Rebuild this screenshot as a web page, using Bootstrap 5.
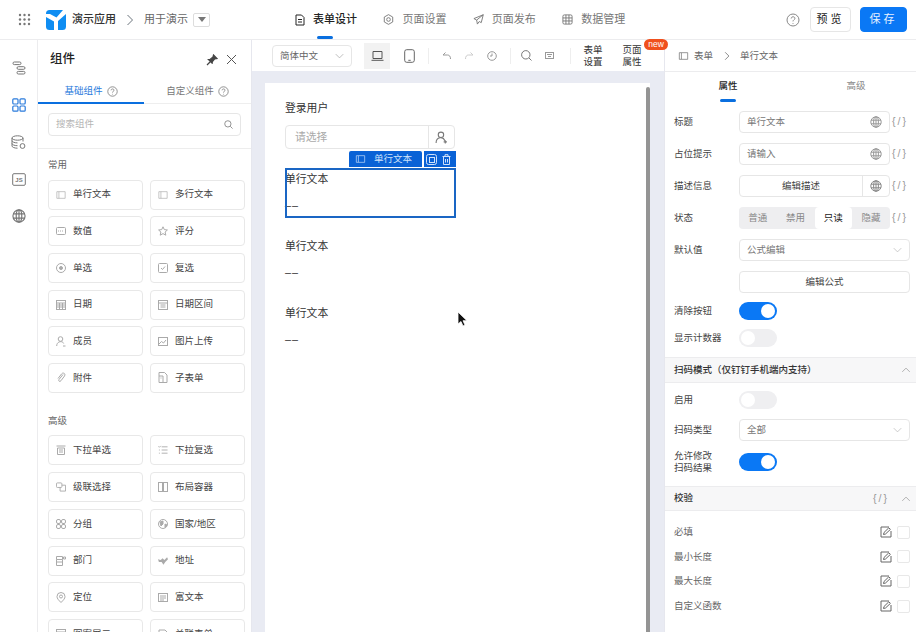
<!DOCTYPE html>
<html lang="zh"><head><meta charset="utf-8"><title>表单设计</title>
<link href="https://cdn.jsdelivr.net/npm/bootstrap@5.3.0/dist/css/bootstrap.min.css" rel="stylesheet">
<style>
html,body{height:632px;overflow:hidden}
body{font-family:"Liberation Sans","Noto Sans CJK SC",sans-serif;font-size:9.5px;color:#333;background:#fff;position:relative;line-height:1.3}
svg{display:block;flex:none;fill:none;stroke:currentColor;stroke-width:1}
.topbar{height:40px;border-bottom:1px solid #ececee;padding-left:18px}
.brandtxt{font-size:11px;color:#333;font-weight:500}
.subtxt{font-size:11px;color:#666}
.ver{width:17px;height:14px;border:1px solid #ddd;border-radius:2px;margin-left:5px}
.navi{font-size:11px;color:#777;position:relative;height:39px;gap:8px}
.navi.on{color:#222;font-weight:500}
.navi.on::after{content:"";position:absolute;left:22px;bottom:0;width:16px;height:3px;border-radius:2px;background:#0a6fdf}
.bt{height:25px;border-radius:4px;font-size:11px;letter-spacing:3px;border:1px solid #e6e6e6;background:#fff;color:#222;padding:0;white-space:nowrap}
.bt.pri{background:#0a78f5;border-color:#0a78f5;color:#e8f2ff}
.rail{width:38px;gap:23px;padding-top:21px;color:#777;border-right:1px solid #ececee;flex:none}
.leftp{width:214px;flex:none;border-right:1px solid #e6e7ee;overflow:hidden}
.ptitle{font-size:12.5px;font-weight:500;color:#222;height:39px;padding:0 14px 0 12px}
.tabx{height:25px;font-size:9.5px;color:#777;gap:4px;border-bottom:1px solid #eee}
.tabx.on{color:#2a7bdc;border-bottom:1px solid #0a6fdf;box-shadow:inset 0 -1px 0 #0a6fdf}
.searchb{height:22.5px;margin:9px 10px 12.5px 10px;border:1px solid #e6e6e6;border-radius:4px;padding:0 7px;color:#b5b5b5}
.grp{border-top:1px solid #ededed;padding:9px 6px 0 10px}
.grpt{font-size:9.5px;color:#666;margin-bottom:8.5px;line-height:13px}
.cgrid{display:grid;grid-template-columns:95px 95px;column-gap:7px;row-gap:6.7px;margin-bottom:21px}
.citem{height:30px;border:1px solid #e8e8e8;border-radius:4px;display:flex;align-items:center;padding-left:7px;gap:7px;color:#444;font-size:9.5px;white-space:nowrap}
.citem svg{color:#aaa;width:10px}
.mid{width:412px;flex:none}
.tools{height:32px;padding-left:20px;color:#999}
.sel{width:80px;height:22px;border:1px solid #e6e6e6;border-radius:4px;padding:0 7px;color:#666;font-size:9.5px}
.tact{width:26px;height:26px;background:#f2f2f2;color:#555;margin-left:12px}
.sep{width:1px;height:16px;background:#eee}
.two{font-size:9.5px;color:#333;line-height:12px;width:20px;text-align:center}
.newb{position:absolute;left:644px;top:39px;width:24px;height:11px;border-radius:6px;background:#f0501e;color:#fff;font-size:8.5px;line-height:11px;text-align:center}
.cvs{background:#e9ebf3;padding:12px 14px 0 13px;overflow:hidden}
.paper{background:#fff;height:560px;padding:17px 20px;position:relative;width:385px}
.scrollv{position:absolute;right:0;top:4px;bottom:0;width:4px;background:#949494;border-radius:2px 2px 0 0}
.lab{font-size:10.8px;color:#333;line-height:16px}
.usr{width:170px;height:24.5px;border:1px solid #e6e6e6;border-radius:4px;margin-top:8.5px;margin-bottom:19px;color:#aaa;font-size:10.8px}
.usr .ph{padding-left:9px}
.usr .adn{width:26px;border-left:1px solid #e6e6e6;color:#777}
.fld{width:171px;height:50px;margin-bottom:17px;position:relative;color:#222}
.fld .lab{padding-top:3px}
.fld .dsh{font-size:10.8px;line-height:16px;margin-top:10px;color:#333;letter-spacing:1px}
.fld.act{outline:2px solid #1a66c4;outline-offset:-2px}
.seltag{position:absolute;right:0;top:-17px;display:flex;gap:2px;height:16px;color:#cfe2fb;font-size:9.5px;white-space:nowrap}
.seltag>div{background:#0a62d6;border-radius:2px 2px 0 0;display:flex;align-items:center}
.rightp{flex:1 1 auto;border-left:1px solid #e6e7ee;overflow:hidden}
.crumb{height:32px;border-bottom:1px solid #ececee;padding:1px 0 0 13px;color:#666;gap:5px;font-size:9.5px}
.rtabs{height:34px}
.rtab{flex:none;font-size:9.5px;text-align:center;color:#888;position:relative;padding-top:8px}
.rtab.on{color:#222;font-weight:500}
.rtab.on::after{content:"";position:absolute;left:50%;margin-left:-8px;bottom:4px;width:16px;height:3px;border-radius:2px;background:#0a6fdf}
.rw{display:flex;align-items:center;padding:0 6px 0 9px;color:#444}
.rw>.lb{width:65px;flex:none;font-size:9.5px;line-height:12px;color:#444}
.inp{width:151px;height:22px;flex:none;border:1px solid #e6e6e6;border-radius:4px;padding:0 7px;color:#777;font-size:9.5px}
.inp.full{width:171px}
.globe{color:#999;margin-left:auto}
.ex{width:20px;flex:none;text-align:center;color:#999;font-size:10.5px;letter-spacing:2px;white-space:nowrap;font-family:"Liberation Sans",sans-serif}
.h32{height:32px}
.seg{background:#eeeef0;border-radius:4px;height:22px;width:151px;flex:none;padding:0;color:#888}
.seg span{flex:1;text-align:center;line-height:22px}
.seg .on{background:#fff;color:#222;border-radius:4px}
.btnl{justify-content:center;color:#444}
.sw{width:38px;height:18px;border-radius:9px;background:#efeff1;position:relative}
.sw::after{content:"";position:absolute;left:2px;top:2px;width:14px;height:14px;border-radius:50%;background:#fff}
.sw.on{background:#0a78f5}
.sw.on::after{left:22px}
.band{height:26px;background:#f7f7f8;border-top:1px solid #ececee;border-bottom:1px solid #ececee;padding:0 5px 0 9px;font-weight:500;color:#333}
.chk{width:13px;height:13px;border:1px solid #e8e8e8;border-radius:2px;margin-left:5px}
.valrow{height:24.6px;color:#666}
.valrow .lb{color:#666}
.cursor{position:absolute;left:457px;top:311px}
</style></head><body>
<svg width="0" height="0" style="position:absolute">
<symbol id="globe" viewBox="0 0 12 12"><circle cx="6" cy="6" r="5.2"/><ellipse cx="6" cy="6" rx="2.4" ry="5.2"/><path d="M1 4.2h10M1 7.8h10M6 .8v10.400"/></symbol>
<symbol id="input" viewBox="0 0 12 12"><path d="M3.500 2H11v8H3.500M3.500 2H1v8h2.500M3.500 2v8" stroke-opacity=".8"/></symbol>
<symbol id="help" viewBox="0 0 14 14"><circle cx="7" cy="7" r="6"/><path d="M5.200 5.500C5.200 3.200 8.900 3.200 8.900 5.400 8.900 6.800 7 6.800 7 8.400M7 10v.8"/></symbol>
<symbol id="chev" viewBox="0 0 8 12"><path d="M1.500 1 6.500 6 1.500 11"/></symbol>
<symbol id="down" viewBox="0 0 12 8"><path d="M1 1.500 6 6.500 11 1.500"/></symbol>
<symbol id="up" viewBox="0 0 12 8"><path d="M1 6.500 6 1.500 11 6.500"/></symbol>
<symbol id="edit" viewBox="0 0 12 12"><path d="M9 1H1v10h10V5"/><path d="M3.500 8.500 4 6.500 8.800 1.800 10.400 3.400 5.500 8z"/></symbol>
<symbol id="user" viewBox="0 0 12 12"><circle cx="5.500" cy="3.500" r="2.500"/><path d="M1 11c0-6 7-6 8-2"/><path d="M8 10h3M9.500 8.500v3"/></symbol>
</svg>

<header class="topbar d-flex align-items-center">
 <svg width="13" height="13" viewBox="0 0 13 13" style="stroke:none;fill:#777"><circle cx="2" cy="2" r="1.200"/><circle cx="6.500" cy="2" r="1.200"/><circle cx="11" cy="2" r="1.200"/><circle cx="2" cy="6.500" r="1.200"/><circle cx="6.500" cy="6.500" r="1.200"/><circle cx="11" cy="6.500" r="1.200"/><circle cx="2" cy="11" r="1.200"/><circle cx="6.500" cy="11" r="1.200"/><circle cx="11" cy="11" r="1.200"/></svg>
 <svg width="20" height="20" viewBox="0 0 20 20" style="margin-left:15px;stroke:none"><rect width="20" height="20" rx="3.500" fill="#0f8df2"/><path d="M0 7 8 11.500V20H12V11L20 4V0H17L10.500 7.500 4 4 0 4z" fill="#fff"/></svg>
 <span class="brandtxt" style="margin-left:6px">演示应用</span>
 <svg width="8" height="12" class="text-secondary" style="margin:0 10px"><use href="#chev"/></svg>
 <span class="subtxt">用于演示</span>
 <div class="ver d-flex align-items-center justify-content-center"><svg width="8" height="5" viewBox="0 0 8 5" style="stroke:none;fill:#777"><path d="M0 0h8L4 5z"/></svg></div>
 <div class="d-flex" style="margin-left:85px;gap:26.400px">
  <div class="navi on d-flex align-items-center"><svg width="10" height="12" viewBox="0 0 10 12"><path d="M1 1h5.500L9 3.500V11H1zM3 5.500h4M3 8h4"/></svg>表单设计</div>
  <div class="navi d-flex align-items-center"><svg width="11" height="11" viewBox="0 0 12 12"><path d="M6 .7 10.600 3.300V8.700L6 11.300 1.400 8.700V3.300z"/><circle cx="6" cy="6" r="2"/></svg>页面设置</div>
  <div class="navi d-flex align-items-center"><svg width="11" height="11" viewBox="0 0 12 12"><path d="M11.200.8 1 5l3 1.600L4.800 11l2-2.800 2.200 1.200zM4 6.600 11.200.8"/></svg>页面发布</div>
  <div class="navi d-flex align-items-center"><svg width="11" height="11" viewBox="0 0 12 12"><rect x="1" y="1" width="10" height="10" rx="1.500"/><path d="M1 4.300h10M1 7.600h10M4.300 1v10M7.600 1v10"/></svg>数据管理</div>
 </div>
 <svg width="14" height="14" class="ms-auto" style="color:#888"><use href="#help"/></svg>
 <button class="bt d-flex align-items-center justify-content-center" style="width:41px;margin-left:10px">预览</button>
 <button class="bt pri d-flex align-items-center justify-content-center" style="width:47px;margin:0 9px">保存</button>
</header>

<div class="d-flex" style="height:592px">
 <nav class="rail d-flex flex-column align-items-center">
  <svg width="14" height="14" viewBox="0 0 14 14"><rect x="1" y="1" width="8" height="2.600" rx="1.300"/><rect x="5" y="5.700" width="8" height="2.600" rx="1.300"/><rect x="5" y="10.400" width="8" height="2.600" rx="1.300"/></svg>
  <svg width="14" height="14" viewBox="0 0 14 14" style="color:#2a7bdc;stroke-width:1.200"><rect x=".8" y=".8" width="5.200" height="5.200" rx="1"/><rect x="8" y=".8" width="5.200" height="5.200" rx="1"/><rect x=".8" y="8" width="5.200" height="5.200" rx="1"/><rect x="8" y="8" width="5.200" height="5.200" rx="1"/></svg>
  <svg width="15" height="15" viewBox="0 0 15 15"><ellipse cx="6.500" cy="3" rx="5.500" ry="2.200"/><path d="M1 3v8c0 1.200 2.500 2.200 5.500 2.200M12 3v3.500M1 5.700c0 1.200 2.500 2.200 5.500 2.200M1 8.500c0 1.200 2.500 2.200 5.500 2.200"/><circle cx="11.500" cy="11" r="2.400"/></svg>
  <svg width="14" height="13" viewBox="0 0 14 13"><rect x=".7" y=".7" width="12.600" height="11.600" rx="1.200"/><text x="7" y="9" font-size="6" font-weight="700" text-anchor="middle" fill="currentColor" stroke="none" font-family="Liberation Sans">JS</text></svg>
  <svg width="14" height="14"><use href="#globe"/></svg>
 </nav>
 <aside class="leftp">
  <div class="ptitle d-flex align-items-center justify-content-between"><span>组件</span><span class="d-flex align-items-center gap-2"><svg width="12" height="12" viewBox="0 0 12 12" style="color:#444;fill:#444;stroke-width:1.200"><path d="M7.500 1 11 4.500 8.500 5 6 8 6.500 9.500 2.500 5.500 4 5.500 7 3zM4.500 7.500 1 11"/></svg><svg width="11" height="11" viewBox="0 0 11 11" style="color:#555"><path d="M1 1 10 10M10 1 1 10"/></svg></span></div>
  <div class="d-flex">
   <div class="tabx on d-flex align-items-center justify-content-center" style="width:106px">基础组件 <svg width="11" height="11" style="color:#777"><use href="#help"/></svg></div>
   <div class="tabx d-flex align-items-center justify-content-center flex-grow-1">自定义组件 <svg width="11" height="11"><use href="#help"/></svg></div>
  </div>
  <div class="searchb d-flex align-items-center justify-content-between"><span>搜索组件</span><svg width="9" height="9" viewBox="0 0 10 10" style="color:#888"><circle cx="4.300" cy="4.300" r="3.500"/><path d="M7 7 9.500 9.500"/></svg></div>
  <div class="grp">
   <div class="grpt">常用</div>
   <div class="cgrid">
    <div class="citem"><svg width="10" height="10"><use href="#input"/></svg>单行文本</div>
    <div class="citem"><svg width="10" height="10"><use href="#input"/></svg>多行文本</div>
    <div class="citem"><svg width="10" height="8" viewBox="0 0 10 8"><rect x=".5" y=".5" width="9" height="7" rx="1"/><path d="M2 4h6" stroke-dasharray="1 1"/></svg>数值</div>
    <div class="citem"><svg width="10" height="10" viewBox="0 0 10 10"><path d="M5 .8 6.300 3.600 9.400 4 7.100 6 7.800 9.200 5 7.600 2.200 9.200 2.900 6 .6 4 3.700 3.600z"/></svg>评分</div>
    <div class="citem"><svg width="10" height="10" viewBox="0 0 10 10"><circle cx="5" cy="5" r="4.500"/><circle cx="5" cy="5" r="1.500" fill="currentColor"/></svg>单选</div>
    <div class="citem"><svg width="10" height="10" viewBox="0 0 10 10"><rect x=".5" y=".5" width="9" height="9" rx="1"/><path d="M3 5 4.500 6.500 7 3.500"/></svg>复选</div>
    <div class="citem"><svg width="10" height="10" viewBox="0 0 10 10"><rect x=".5" y=".5" width="9" height="9"/><path d="M.5 3h9M.5 5h9M.5 7h9M3.500 3v6.500M6.500 3v6.500"/></svg>日期</div>
    <div class="citem"><svg width="10" height="10" viewBox="0 0 10 10"><rect x=".5" y=".5" width="9" height="9"/><path d="M.5 3h9M2.500 5h5M2.500 7h5"/></svg>日期区间</div>
    <div class="citem"><svg width="10" height="11" viewBox="0 0 10 11"><circle cx="4.500" cy="3" r="2.300"/><path d="M.7 10c0-5 6-5.500 7-2.500M7 10h2.500"/></svg>成员</div>
    <div class="citem"><svg width="10" height="9" viewBox="0 0 10 9"><rect x=".5" y=".5" width="9" height="8"/><path d="M1 7 3.500 4.500 5.500 6 8 3"/></svg>图片上传</div>
    <div class="citem"><svg width="10" height="11" viewBox="0 0 10 11"><path d="M7 2.500 3 7.500C2 9.500 4 10 5 8.700L8.500 4C10 1.500 7 0 5.500 2L2 6.500"/></svg>附件</div>
    <div class="citem"><svg width="9" height="11" viewBox="0 0 9 11"><path d="M.5.5h5.500L8.500 3v7.500h-8zM.5 4h4v6.500M2 6h1"/></svg>子表单</div>
   </div>
   <div class="grpt">高级</div>
   <div class="cgrid">
    <div class="citem"><svg width="10" height="10" viewBox="0 0 10 10"><path d="M.5 1h9M1.500 3h7v6.500h-7zM3 5h4M3 7h4"/></svg>下拉单选</div>
    <div class="citem"><svg width="11" height="10" viewBox="0 0 11 10"><path d="M4 1.500h6.500M4 5h6.500M4 8.500h6.500M.5 1 1.500 2 3 .5M1 5h1M1 8.500h1"/></svg>下拉复选</div>
    <div class="citem"><svg width="11" height="10" viewBox="0 0 11 10"><rect x=".5" y=".5" width="6" height="5" rx="1"/><path d="M6.500 3h4v6.500h-6V5.500"/></svg>级联选择</div>
    <div class="citem"><svg width="10" height="10" viewBox="0 0 10 10"><rect x=".5" y=".5" width="4" height="9"/><rect x="5.500" y=".5" width="4" height="9"/></svg>布局容器</div>
    <div class="citem"><svg width="10" height="10" viewBox="0 0 10 10"><rect x=".5" y=".5" width="4" height="4" rx="1.500"/><rect x="5.500" y=".5" width="4" height="4" rx="1.500"/><rect x=".5" y="5.500" width="4" height="4" rx="1.500"/><rect x="5.500" y="5.500" width="4" height="4" rx="1.500"/></svg>分组</div>
    <div class="citem"><svg width="10" height="10" viewBox="0 0 10 10"><circle cx="5" cy="5" r="4.500"/><path d="M2 3 5 2 5 5 3 7zM7 5 9 6 7 8.500z" fill="currentColor"/></svg>国家/地区</div>
    <div class="citem"><svg width="10" height="10" viewBox="0 0 10 10"><path d="M.5.5h6v3h-6zM.5 3.500v6h6v-6M.5 6h6M7.500 1h2v2h-2z"/></svg>部门</div>
    <div class="citem"><svg width="11" height="8" viewBox="0 0 11 8" style="fill:currentColor;stroke:none"><path d="M0 2 3 3 5 1 7 3 10 0 11 2 8 5 6 8 4 5 1 5z"/></svg>地址</div>
    <div class="citem"><svg width="9" height="11" viewBox="0 0 9 11"><path d="M4.500 10.500C2 8 .5 6.500.5 4.500a4 4 0 0 1 8 0C8.500 6.500 7 8 4.500 10.500z"/><circle cx="4.500" cy="4.500" r="1.500"/></svg>定位</div>
    <div class="citem"><svg width="10" height="9" viewBox="0 0 10 9"><rect x=".5" y=".5" width="9" height="8"/><path d="M2 3h6M2 5h6M2 7h4"/></svg>富文本</div>
    <div class="citem"><svg width="10" height="9" viewBox="0 0 10 9"><rect x=".5" y=".5" width="9" height="8"/><path d="M.5 3h9"/></svg>图案展示</div>
    <div class="citem"><svg width="10" height="10" viewBox="0 0 10 10"><path d="M1 1h6l2 2v6H1z"/></svg>关联表单</div>
   </div>
  </div>
 </aside>

 <section class="mid d-flex flex-column">
  <div class="tools d-flex align-items-center">
   <div class="sel d-flex align-items-center justify-content-between">简体中文<svg width="9" height="6" style="color:#aaa"><use href="#down"/></svg></div>
   <div class="tact d-flex align-items-center justify-content-center"><svg width="13" height="10" viewBox="0 0 13 10"><path d="M2 .5h9v7H2zM.5 9.300h12"/></svg></div>
   <div class="d-flex align-items-center justify-content-center" style="width:13px;margin-left:13px;color:#666"><svg width="11" height="14" viewBox="0 0 11 14"><rect x=".7" y=".7" width="9.600" height="12.600" rx="2"/><path d="M4.300 11.300h2.400"/></svg></div>
   <div class="sep" style="margin-left:12px"></div>
   <svg width="9" height="8" viewBox="0 0 9 8" style="margin-left:13px"><path d="M3.500.5 1 3h4.500C7.500 3 8.500 4.500 8.500 7"/></svg>
   <svg width="9" height="8" viewBox="0 0 9 8" style="margin-left:14px;color:#ccc"><path d="M5.500.5 8 3H3.500C1.500 3 .5 4.500.5 7"/></svg>
   <svg width="10" height="10" viewBox="0 0 10 10" style="margin-left:13px"><circle cx="5" cy="5" r="4.300"/><path d="M5 2.500V5H3"/></svg>
   <div class="sep" style="margin-left:13px"></div>
   <svg width="11" height="11" viewBox="0 0 11 11" style="margin-left:10px;color:#777"><circle cx="4.800" cy="4.800" r="4.200"/><path d="M8 8 10.500 10.500"/></svg>
   <svg width="9" height="7" viewBox="0 0 9 7" style="margin-left:13px"><rect x=".5" y=".5" width="8" height="6"/><path d="M2 2.500h5M3 4.500h3"/></svg>
   <div class="sep" style="margin-left:16px"></div>
   <div class="two" style="margin-left:12px">表单设置</div>
   <div class="two" style="margin-left:19px">页面属性</div>
  </div>
  <div class="cvs flex-grow-1">
   <div class="paper">
    <div class="scrollv"></div>
    <div class="lab">登录用户</div>
    <div class="usr d-flex align-items-stretch"><span class="ph flex-grow-1 d-flex align-items-center">请选择</span><span class="adn d-flex align-items-center justify-content-center"><svg width="13" height="13"><use href="#user"/></svg></span></div>
    <div class="fld act">
     <div class="seltag">
      <div style="width:73px;padding-left:6px;gap:8px"><svg width="11" height="10"><use href="#input"/></svg>单行文本</div>
      <div style="width:32px;gap:5px;padding-left:2px;border-radius:0"><svg width="11" height="11" viewBox="0 0 11 11"><rect x=".5" y=".5" width="10" height="10" rx="2"/><rect x="3.500" y="3.500" width="5" height="5"/></svg><svg width="9" height="11" viewBox="0 0 9 11"><path d="M.5 2.500h8M3 2.500V.7h3v1.800M1.500 2.500v8h6v-8M3.500 5v3.500M5.500 5v3.500"/></svg></div>
     </div>
     <div class="lab">单行文本</div><div class="dsh">––</div>
    </div>
    <div class="fld"><div class="lab">单行文本</div><div class="dsh">––</div></div>
    <div class="fld"><div class="lab">单行文本</div><div class="dsh">––</div></div>
   </div>
  </div>
 </section>

 <aside class="rightp">
  <div class="crumb d-flex align-items-center"><svg width="11" height="10"><use href="#input"/></svg>表单<svg width="6" height="10" style="margin:0 5px 0 6px"><use href="#chev"/></svg>单行文本</div>
  <div class="rtabs d-flex"><div class="rtab on" style="width:126px">属性</div><div class="rtab" style="width:130px">高级</div></div>
  <div class="rw h32"><span class="lb">标题</span><div class="inp d-flex align-items-center">单行文本<svg width="12" height="12" class="globe"><use href="#globe"/></svg></div><span class="ex">{/}</span></div>
  <div class="rw h32"><span class="lb">占位提示</span><div class="inp d-flex align-items-center">请输入<svg width="12" height="12" class="globe"><use href="#globe"/></svg></div><span class="ex">{/}</span></div>
  <div class="rw h32"><span class="lb">描述信息</span><div class="inp d-flex align-items-center p-0"><span class="flex-grow-1 text-center" style="color:#444">编辑描述</span><span class="d-flex align-items-center justify-content-center h-100" style="width:27px;border-left:1px solid #e6e6e6"><svg width="12" height="12" style="color:#888"><use href="#globe"/></svg></span></div><span class="ex">{/}</span></div>
  <div class="rw h32"><span class="lb">状态</span><div class="seg d-flex"><span>普通</span><span>禁用</span><span class="on">只读</span><span>隐藏</span></div><span class="ex">{/}</span></div>
  <div class="rw h32"><span class="lb">默认值</span><div class="inp full d-flex align-items-center justify-content-between">公式编辑<svg width="9" height="6" style="color:#bbb"><use href="#down"/></svg></div></div>
  <div class="rw h32"><span class="lb"></span><div class="inp full btnl d-flex align-items-center">编辑公式</div></div>
  <div class="rw" style="height:26px"><span class="lb">清除按钮</span><div class="sw on"></div></div>
  <div class="rw" style="height:27px;margin-bottom:6px"><span class="lb">显示计数器</span><div class="sw"></div></div>
  <div class="band d-flex align-items-center justify-content-between">扫码模式（仅钉钉手机端内支持）<svg width="10" height="6" style="color:#999"><use href="#up"/></svg></div>
  <div class="rw" style="height:34px"><span class="lb">启用</span><div class="sw"></div></div>
  <div class="rw" style="height:26px"><span class="lb">扫码类型</span><div class="inp full d-flex align-items-center justify-content-between">全部<svg width="9" height="6" style="color:#bbb"><use href="#down"/></svg></div></div>
  <div class="rw" style="height:38px;margin-bottom:5px"><span class="lb">允许修改<br>扫码结果</span><div class="sw on"></div></div>
  <div class="band d-flex align-items-center" style="height:25px;margin-bottom:9px">校验<span class="ex ms-auto" style="width:auto;margin-right:12px;font-weight:400">{/}</span><svg width="10" height="6" style="color:#999"><use href="#up"/></svg></div>
  <div class="rw valrow"><span class="lb me-auto">必填</span><svg width="12" height="12" style="color:#666"><use href="#edit"/></svg><div class="chk"></div></div>
  <div class="rw valrow"><span class="lb me-auto">最小长度</span><svg width="12" height="12" style="color:#666"><use href="#edit"/></svg><div class="chk"></div></div>
  <div class="rw valrow"><span class="lb me-auto">最大长度</span><svg width="12" height="12" style="color:#666"><use href="#edit"/></svg><div class="chk"></div></div>
  <div class="rw valrow"><span class="lb me-auto">自定义函数</span><svg width="12" height="12" style="color:#666"><use href="#edit"/></svg><div class="chk"></div></div>
 </aside>
</div>
<div class="newb">new</div>
<svg class="cursor" width="11" height="16" viewBox="0 0 11 16" style="fill:#111;stroke:#fff;stroke-width:.8"><path d="M1 1v12l3-2.500 2 4.500 2-1-2-4.300h4z"/></svg>
<script src="https://cdn.jsdelivr.net/npm/bootstrap@5.3.0/dist/js/bootstrap.bundle.min.js"></script>
</body></html>
